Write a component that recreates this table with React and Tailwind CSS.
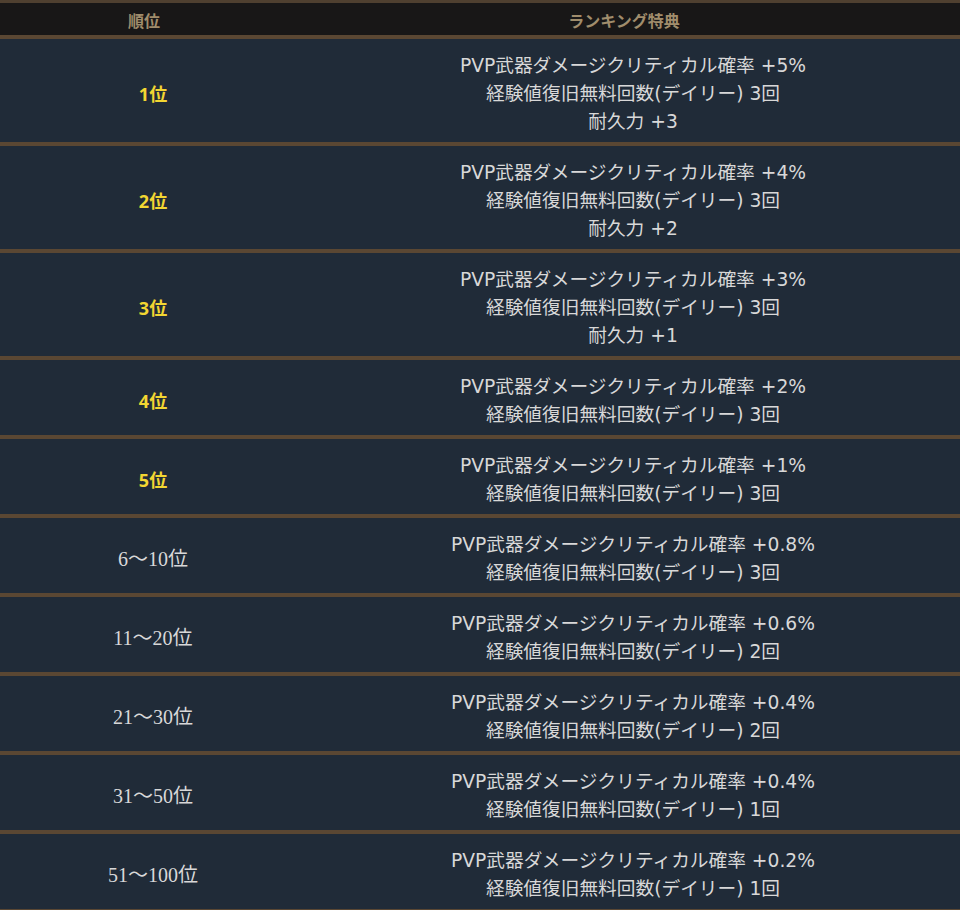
import React from "react";

const rows = [
  { rank: "1位", top: true, lines: ["PVP武器ダメージクリティカル確率 +5%", "経験値復旧無料回数(デイリー) 3回", "耐久力 +3"] },
  { rank: "2位", top: true, lines: ["PVP武器ダメージクリティカル確率 +4%", "経験値復旧無料回数(デイリー) 3回", "耐久力 +2"] },
  { rank: "3位", top: true, lines: ["PVP武器ダメージクリティカル確率 +3%", "経験値復旧無料回数(デイリー) 3回", "耐久力 +1"] },
  { rank: "4位", top: true, lines: ["PVP武器ダメージクリティカル確率 +2%", "経験値復旧無料回数(デイリー) 3回"] },
  { rank: "5位", top: true, lines: ["PVP武器ダメージクリティカル確率 +1%", "経験値復旧無料回数(デイリー) 3回"] },
  { rank: "6～10位", lines: ["PVP武器ダメージクリティカル確率 +0.8%", "経験値復旧無料回数(デイリー) 3回"] },
  { rank: "11～20位", lines: ["PVP武器ダメージクリティカル確率 +0.6%", "経験値復旧無料回数(デイリー) 2回"] },
  { rank: "21～30位", lines: ["PVP武器ダメージクリティカル確率 +0.4%", "経験値復旧無料回数(デイリー) 2回"] },
  { rank: "31～50位", lines: ["PVP武器ダメージクリティカル確率 +0.4%", "経験値復旧無料回数(デイリー) 1回"] },
  { rank: "51～100位", lines: ["PVP武器ダメージクリティカル確率 +0.2%", "経験値復旧無料回数(デイリー) 1回"] },
];

const App = () => {
  return (
    <div className="w-[960px] h-[910px] bg-[#202b38] font-['Noto_Sans','Noto_Sans_CJK_JP',sans-serif]">
      <div className="border-t-[3px] border-[#4f4030]">
        {/* HEADER */}
        <div className="flex h-[36px] items-center pt-[4px] bg-[#181717] border-b-4 border-[#5a4733] text-[16px] font-bold text-[#a08d6c]">
          <div className="w-[288px] text-center">順位</div>
          <div className="flex-1 text-center">ランキング特典</div>
        </div>

        {/* ROWS */}
        {rows.map((row) => (
          <div key={row.rank} className="flex items-center border-b-4 border-[#5a4733] pt-[13px] pb-[6px]">
            <div className="w-[306px] text-center">
              {row.top ? (
                <span className="text-[18px] font-bold text-[#f2d632]">{row.rank}</span>
              ) : (
                <span className="text-[20px] text-[#d8d8d8] font-['Liberation_Serif','Noto_Sans_CJK_JP',serif]">
                  {row.rank}
                </span>
              )}
            </div>
            <div className="flex-1 text-center text-[18.7px] leading-[28px] text-[#d8d8d8] font-['DejaVu_Sans','Noto_Sans_CJK_JP',sans-serif]">
              {row.lines.map((l) => (
                <div key={l}>{l}</div>
              ))}
            </div>
          </div>
        ))}
      </div>
    </div>
  );
};

export default App;
